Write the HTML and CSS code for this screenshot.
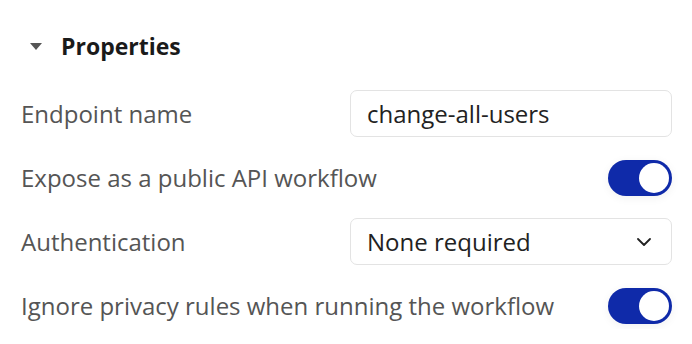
FILE: index.html
```html
<!DOCTYPE html>
<html lang="en">
<head>
    <meta charset="UTF-8">
    <meta name="viewport" content="width=device-width, initial-scale=1.0">
    <title>Properties</title>
    <link rel="stylesheet" href="styles.css">
</head>
<body>
    <div class="panel">
        <div class="section-header">
            <span class="caret"></span>
            <h2>Properties</h2>
        </div>

        <div class="props">
            <label class="prop-label" for="endpoint">Endpoint name</label>
            <input id="endpoint" class="field" type="text" value="change-all-users">

            <span class="prop-label">Expose as a public API workflow</span>
            <span class="toggle on"><span class="knob"></span></span>

            <span class="prop-label">Authentication</span>
            <div class="field select">
                <span>None required</span>
                <svg class="chevron" width="14" height="8" viewBox="0 0 14 8">
                    <path d="M1 1l6 6 6-6" fill="none" stroke="#222" stroke-width="1.8" stroke-linecap="round" stroke-linejoin="round"/>
                </svg>
            </div>

            <span class="prop-label">Ignore privacy rules when running the workflow</span>
            <span class="toggle on"><span class="knob"></span></span>
        </div>
    </div>
</body>
</html>
```

FILE: styles.css
```css
body {
    margin: 0;
    background-color: #fff;
    font-family: "Open Sans", Arial, sans-serif;
}
.panel {
    padding: 31px 20px 0 21px;
}
.section-header {
    display: flex;
    align-items: center;
    height: 30px;
    margin-bottom: 29px;
}
.caret {
    width: 0;
    height: 0;
    margin-left: 9px;
    margin-right: 19px;
    border-left: 6px solid transparent;
    border-right: 6px solid transparent;
    border-top: 7px solid #555;
}
h2 {
    margin: 0;
    font-size: 23px;
    font-weight: 700;
    color: #1a1a1a;
}
.props {
    display: grid;
    grid-template-columns: minmax(0, 1fr) 322px;
    grid-auto-rows: 47px;
    row-gap: 17px;
    align-items: center;
}
.prop-label {
    font-size: 24px;
    color: #555;
    white-space: nowrap;
}
.field {
    box-sizing: border-box;
    height: 47px;
    width: 100%;
    border: 1.5px solid #e3e3e3;
    border-radius: 7px;
    padding: 0 16px;
    font-family: inherit;
    font-size: 24px;
    color: #222;
    background: #fff;
    outline: none;
}
.select {
    display: flex;
    align-items: center;
    justify-content: space-between;
    padding-right: 20px;
}
.toggle {
    justify-self: end;
    position: relative;
    width: 64px;
    height: 36px;
    border-radius: 18px;
    background-color: #0f2aa9;
    box-shadow: 0 2px 10px rgba(0, 0, 0, 0.06);
}
.knob {
    position: absolute;
    top: 3px;
    right: 3px;
    width: 30px;
    height: 30px;
    border-radius: 50%;
    background: #fff;
}
```
